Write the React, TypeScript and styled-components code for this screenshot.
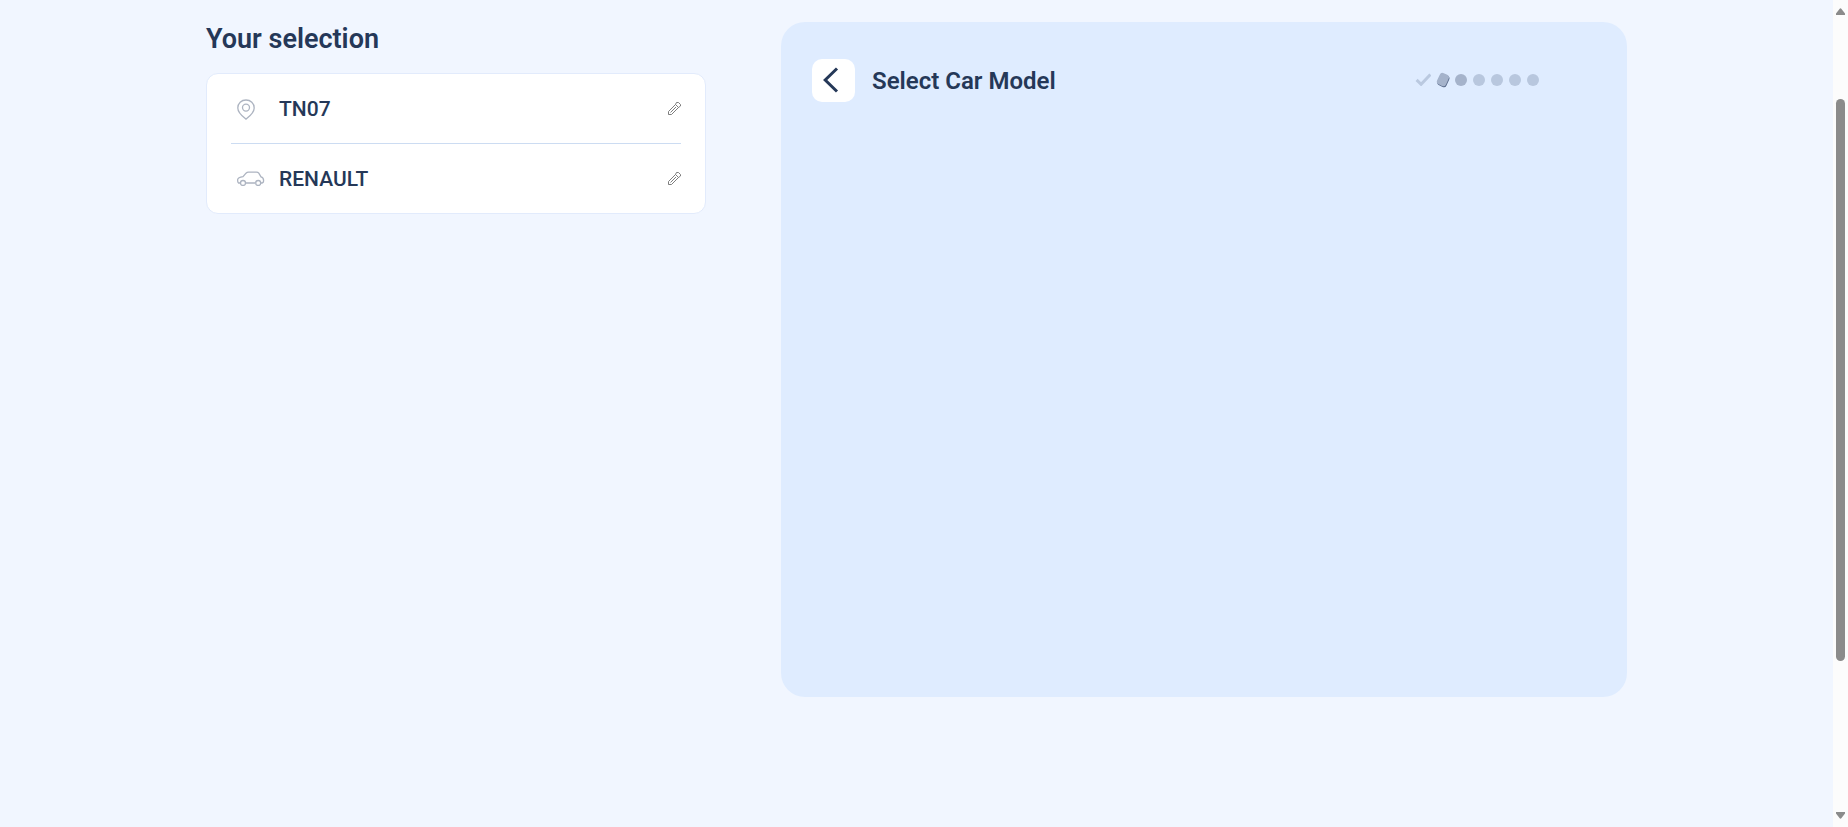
import React from "react";
import styled, { createGlobalStyle } from "styled-components";

const GlobalStyle = createGlobalStyle`
  *, *::before, *::after { box-sizing: border-box; }
  body {
    margin: 0;
    overflow: hidden;
    background: #f1f6ff;
    color: #253858;
    font-family: Roboto, "Liberation Sans", sans-serif;
  }
`;

const Shell = styled.div`
  display: grid;
  grid-template-columns: minmax(0, 1fr) 15px;
  height: 100vh;
`;

const Page = styled.main`
  padding: 22px 24px;
  overflow: hidden;
`;

const Columns = styled.div`
  display: grid;
  grid-template-columns: minmax(0, 500fr) minmax(0, 846fr);
  gap: 75px;
  align-items: start;
  max-width: 1421px;
  margin: 0 auto;
`;

const SelectionTitle = styled.h2`
  margin: 0 0 16px;
  font-size: 27px;
  font-weight: 600;
  line-height: 35px;
`;

const Card = styled.ul`
  list-style: none;
  margin: 0;
  padding: 0 24px;
  background: #fff;
  border: 1px solid #e2ebfc;
  border-radius: 12px;
`;

const Row = styled.li`
  display: grid;
  grid-template-columns: 42px 1fr auto;
  align-items: center;
  height: 69px;
  padding-left: 6px;

  & + & {
    height: 70px;
    border-top: 1px solid #ccdcf2;
  }
`;

const RowLabel = styled.span`
  font-size: 21px;
  font-weight: 500;
  line-height: 28px;
`;

const EditButton = styled.button`
  display: flex;
  padding: 0;
  border: 0;
  background: none;
  cursor: pointer;
`;

const Panel = styled.section`
  min-height: 675px;
  padding: 37px 88px 37px 31px;
  background: #dfecff;
  border-radius: 24px;
`;

const PanelHeader = styled.header`
  display: flex;
  align-items: center;
  gap: 17px;
`;

const BackButton = styled.button`
  display: flex;
  align-items: center;
  justify-content: center;
  width: 43px;
  height: 43px;
  padding: 0 6px 2px 0;
  border: 0;
  border-radius: 10px;
  background: #fff;
  cursor: pointer;
`;

const PanelTitle = styled.h1`
  flex: 1;
  margin: 0;
  font-size: 24px;
  font-weight: 600;
  line-height: 32px;
`;

const Steps = styled.ol`
  display: flex;
  align-items: center;
  gap: 6px;
  list-style: none;
  margin: 0;
  padding: 0 0 2px;
`;

const Step = styled.li`
  display: flex;
`;

const Dot = styled.span<{ $active?: boolean }>`
  width: 12px;
  height: 12px;
  border-radius: 50%;
  background: ${(p) => (p.$active ? "#a5b3cb" : "#b8c7de")};
`;

const ScrollTrack = styled.div`
  display: flex;
  flex-direction: column;
  align-items: center;
  padding: 8px 0;
  background: #fcfcfc;
`;

const ScrollSpace = styled.div<{ $share: number }>`
  flex: ${(p) => p.$share} 0 0;
`;

const ScrollThumb = styled.div`
  flex: 562 0 0;
  width: 9px;
  border-radius: 5px;
  background: #8b8b8b;
`;

const PinIcon = () => (
  <svg width="18" height="22" viewBox="0 0 18 22" fill="none" stroke="#adb4c1" strokeWidth="1.3" aria-hidden="true">
    <path d="M9 21.200C7.400 19.800.8 15 .8 9.900.8 5.200 4.400 2 9 2s8.200 3.200 8.200 7.900c0 5.100-6.600 9.900-8.200 11.300Z" />
    <circle cx="9" cy="9.600" r="3.500" />
  </svg>
);

const CarIcon = () => (
  <svg width="28" height="15" viewBox="0 0 28 15" fill="none" stroke="#adb4c1" strokeWidth="1.3" aria-hidden="true">
    <path d="M3 12H1.500C.8 11.500.6 10.500.6 9.100.6 7 2 6.400 6 5.700L9 2.200Q10 1.200 11.500 1.200H19.500Q21 1.200 21.800 2.200L24 5.900C26 6.500 26.600 7.500 26.600 9.500c0 1.500-.5 2.400-1.500 2.500H24M9 12h9" />
    <circle cx="6" cy="12" r="2.500" />
    <circle cx="21.200" cy="12" r="2.500" />
  </svg>
);

const PencilIcon = () => (
  <svg width="14" height="14" viewBox="0 0 14 14" fill="none" stroke="#6f6f6f" strokeWidth="0.9" strokeLinejoin="round" aria-hidden="true">
    <path d="M1.500 12.500V9.500L8.500 2.500 11.500 5.500 4.500 12.500ZM8.500 2.500 9.500.5h2L13.500 2.500v1.500L11.500 5.500M3.500 10.500l5.500-5.500" />
  </svg>
);

const ChevronIcon = () => (
  <svg width="16" height="26" viewBox="0 0 16 26" fill="none" stroke="#253858" strokeWidth="3" aria-hidden="true">
    <path d="M14 1.500 2.200 13 14 24.500" />
  </svg>
);

const CheckIcon = () => (
  <svg width="16" height="13" viewBox="0 0 16 13" fill="none" stroke="#bac9e0" strokeWidth="3" aria-label="Done">
    <path d="m1.600 6.900 4.500 4.400L15.400 1.500" />
  </svg>
);

const TiltedStepIcon = () => (
  <svg width="12" height="14" viewBox="0 0 12 14" overflow="visible" aria-hidden="true">
    <rect x="1.500" y="1.500" width="9.800" height="12.200" rx="3" fill="#5a6b8b" transform="rotate(25 6.400 7.600)" />
    <rect x="1" y="0.500" width="9.800" height="12.200" rx="3" fill="#a5b3cb" transform="rotate(25 5.900 6.600)" />
  </svg>
);

const ScrollArrow = ({ down = false }: { down?: boolean }) => (
  <svg width="9" height="7" viewBox="0 0 9 7" fill="#8b8b8b" aria-hidden="true">
    <path d={down ? "M0 0h9v1.500L5.500 6q-1 1.400-2 0L0 1.500Z" : "M0 7h9V5.500L5.500 1q-1-1.400-2 0L0 5.500Z"} />
  </svg>
);

const selections = [
  { label: "TN07", Icon: PinIcon },
  { label: "RENAULT", Icon: CarIcon },
];

export default function App() {
  return (
    <>
      <GlobalStyle />
      <Shell>
        <Page>
          <Columns>
            <aside>
              <SelectionTitle>Your selection</SelectionTitle>
              <Card>
                {selections.map(({ label, Icon }) => (
                  <Row key={label}>
                    <Icon />
                    <RowLabel>{label}</RowLabel>
                    <EditButton type="button" aria-label={`Edit ${label}`}>
                      <PencilIcon />
                    </EditButton>
                  </Row>
                ))}
              </Card>
            </aside>
            <Panel>
              <PanelHeader>
                <BackButton type="button" aria-label="Back">
                  <ChevronIcon />
                </BackButton>
                <PanelTitle>Select Car Model</PanelTitle>
                <Steps aria-label="Progress">
                  <Step><CheckIcon /></Step>
                  <Step><TiltedStepIcon /></Step>
                  <Step aria-current="step"><Dot $active /></Step>
                  {[4, 5, 6, 7].map((n) => (
                    <Step key={n}><Dot /></Step>
                  ))}
                </Steps>
              </PanelHeader>
            </Panel>
          </Columns>
        </Page>
        <ScrollTrack aria-hidden="true">
          <ScrollArrow />
          <ScrollSpace $share={84} />
          <ScrollThumb />
          <ScrollSpace $share={151} />
          <ScrollArrow down />
        </ScrollTrack>
      </Shell>
    </>
  );
}
